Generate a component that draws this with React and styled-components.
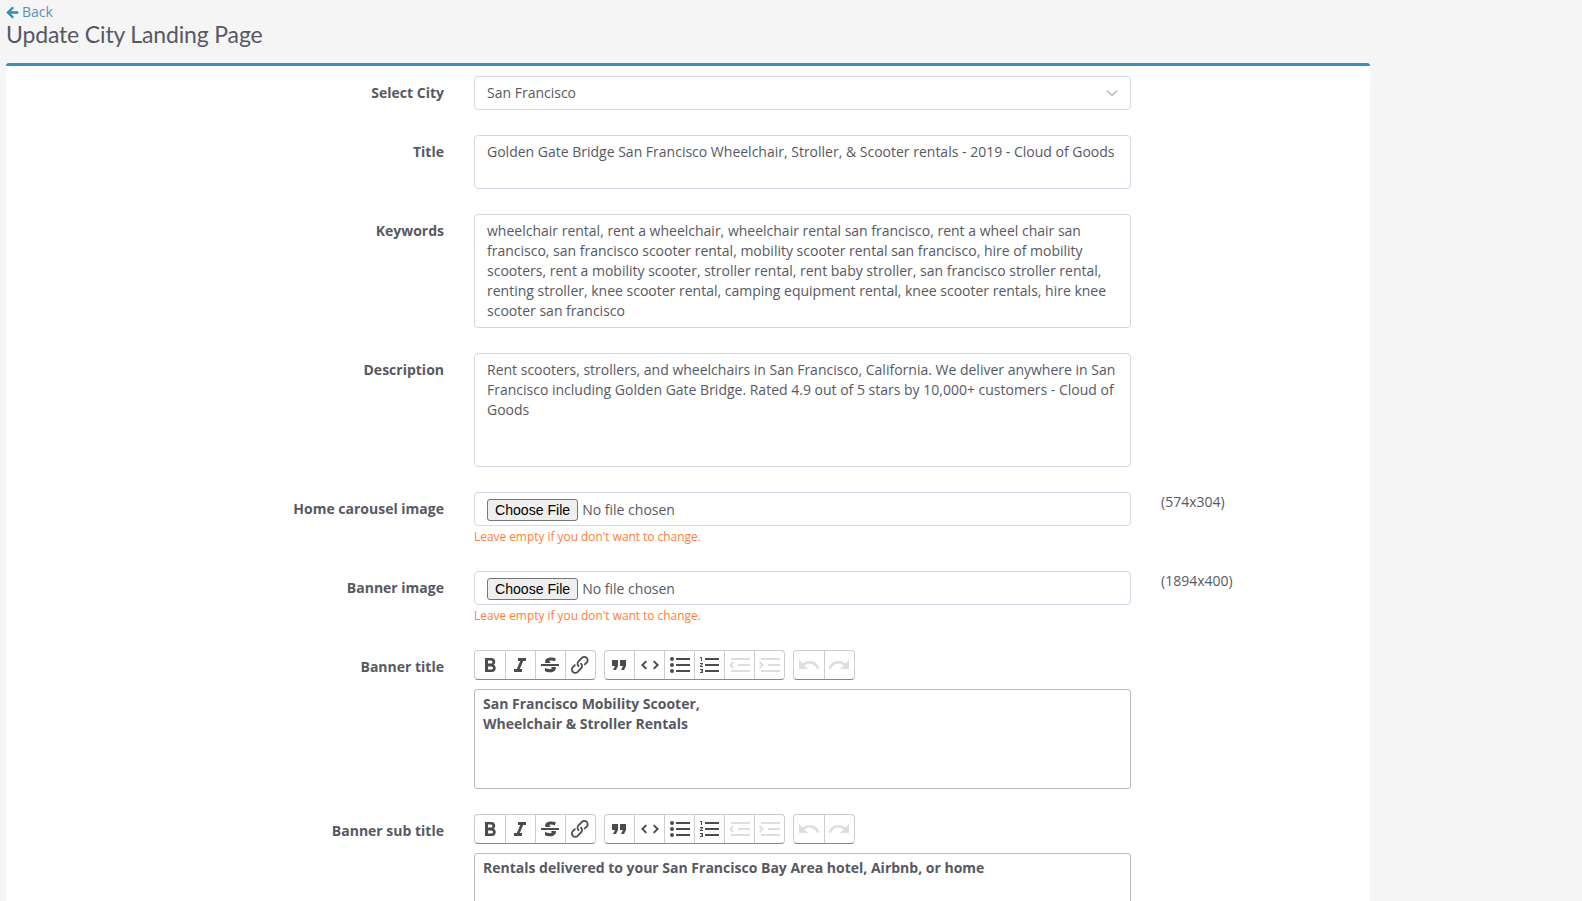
import React from 'react';
import styled, { createGlobalStyle } from 'styled-components';

const GlobalStyle = createGlobalStyle`
  html, body {
    margin: 0;
    height: 100%;
    overflow: hidden;
    background-color: #f5f5f5;
  }
  body {
    font-family: "Open Sans", "Liberation Sans", sans-serif;
    font-size: 14px;
    line-height: 20px;
    color: #575962;
  }
`;

const Page = styled.div`
  padding: 2px 212px 0 6px;
`;

const BackLink = styled.a`
  display: flex;
  align-items: center;
  gap: 3px;
  height: 20px;
  color: #5b8fc0;
  font-size: 14px;
  text-decoration: none;
`;

const BackArrow = styled.svg`
  width: 13px;
  height: 13px;
  fill: #3c8dbc;
  stroke: #3c8dbc;
  stroke-width: 24;
`;

const Heading = styled.h1`
  margin: 0 0 13px;
  height: 28px;
  font-family: Lato, "Noto Sans", sans-serif;
  font-size: 23px;
  line-height: 24px;
  letter-spacing: -0.15px;
  font-weight: 400;
  color: #575962;
`;

const Panel = styled.div`
  background-color: #fff;
  border-top: 3px solid #3c8dbc;
  border-radius: 3px 3px 0 0;
  padding-top: 10px;
`;

const Row = styled.div`
  display: grid;
  grid-template-columns: 438px 657px 1fr;
  column-gap: 30px;
  margin-bottom: 25px;
`;

const Label = styled.label`
  padding-top: 7px;
  text-align: right;
  font-weight: 700;
  color: #575962;
`;

const Field = styled.div`
  min-width: 0;
`;

const SelectWrap = styled.div`
  position: relative;
`;

const CitySelect = styled.select`
  display: block;
  width: 100%;
  height: 34px;
  padding: 0 12px;
  appearance: none;
  background-color: #fff;
  border: 1px solid #d5d6e2;
  border-radius: 4px;
  font: inherit;
  color: #575962;
`;

const Chevron = styled.svg`
  position: absolute;
  top: 13px;
  right: 13px;
  width: 12px;
  height: 8px;
  pointer-events: none;
`;

const TextArea = styled.textarea`
  display: block;
  box-sizing: border-box;
  width: 100%;
  height: ${props => props.$height}px;
  padding: 6px 12px;
  background-color: #fff;
  border: 1px solid #d5d6e2;
  border-radius: 4px;
  font: inherit;
  color: #575962;
  resize: none;
  overflow: hidden;
`;

const FileBox = styled.div`
  display: flex;
  align-items: center;
  box-sizing: border-box;
  height: 34px;
  padding: 2px 12px 0;
  border: 1px solid #d5d6e2;
  border-radius: 4px;
`;

const FileInput = styled.input`
  width: 100%;
  font: inherit;
  color: #575962;

  &::file-selector-button {
    font-family: "Liberation Sans", Arial, sans-serif;
    font-size: 14.1px;
    height: 22px;
    padding: 0 7px;
    margin-right: 4px;
    background-color: #efefef;
    border: 1px solid #767676;
    border-radius: 3px;
    color: #000;
  }
`;

const Hint = styled.div`
  margin: 1px 0;
  font-size: 11.9px;
  line-height: 18px;
  color: #fd7e3c;
`;

const SideNote = styled.div`
  color: #575962;
`;

const Toolbar = styled.div`
  display: flex;
  gap: 8px;
  margin-bottom: 9px;
`;

const ButtonGroup = styled.div`
  display: flex;
  box-sizing: border-box;
  height: 30px;
  border: 1px solid #ccc;
  border-bottom-color: #888;
  border-radius: 4px;
`;

const ToolButton = styled.button`
  display: flex;
  align-items: center;
  justify-content: center;
  width: 30px;
  padding: 0;
  background: none;
  border: 0;
  border-left: 1px solid #ccc;

  &:first-child {
    width: 29.5px;
    border-left: 0;
  }

  svg {
    flex: none;
    width: 24px;
    height: 24px;
    fill: #000;
    opacity: ${props => (props.$off ? 0.125 : 0.7)};
  }
`;

const Editor = styled.div`
  box-sizing: border-box;
  min-height: 100px;
  padding: 4px 8px;
  border: 1px solid #bbb;
  border-radius: 3px;
  font-weight: 700;
  color: #575962;
`;

const paths = {
  bold: 'M15.6 11.8c1-.7 1.6-1.8 1.6-2.8a4 4 0 0 0-4-4H7v14h7c2.1 0 3.7-1.7 3.7-3.8 0-1.5-.8-2.8-2.1-3.4zM10 7.5h3a1.5 1.5 0 1 1 0 3h-3v-3zm3.5 9H10v-3h3.5a1.5 1.5 0 1 1 0 3z',
  italic: 'M10 5v3h2.2l-3.4 8H6v3h8v-3h-2.2l3.4-8H18V5h-8z',
  strike: 'M12.73 14l.28.14c.26.15.45.3.57.44.12.14.18.3.18.5 0 .3-.15.56-.44.75-.3.2-.76.3-1.39.3A13.52 13.52 0 0 1 7 14.95v3.37a10.64 10.64 0 0 0 4.84.88c1.26 0 2.35-.19 3.28-.56.93-.37 1.64-.9 2.14-1.57s.74-1.45.74-2.32c0-.26-.02-.5-.06-.74h-5.2zm-5.5-4c-.08-.28-.12-.59-.12-.93a4.1 4.1 0 0 1 1.68-3.45 7.3 7.3 0 0 1 4.4-1.22c1.6 0 3.2.35 4.8 1.06l-1.16 2.84a11.6 11.6 0 0 0-3.74-.89c-.55 0-.96.1-1.22.3a.86.86 0 0 0-.37.73c0 .25.12.5.35.7.2.2.66.47 1.35.82H7.23zM3 13h18v-2H3v2z',
  link: 'M9.88 13.7a4.3 4.3 0 0 1 0-6.07l3.37-3.37a4.26 4.26 0 0 1 6.07 0 4.3 4.3 0 0 1 0 6.06l-1.96 1.72a.91.91 0 1 1-1.3-1.3l1.97-1.71a2.46 2.46 0 0 0-3.48-3.48l-3.38 3.37a2.46 2.46 0 0 0 0 3.48.91.91 0 1 1-1.3 1.3z M4.25 19.46a4.3 4.3 0 0 1 0-6.07l1.93-1.9a.91.91 0 1 1 1.3 1.3l-1.93 1.9a2.46 2.46 0 0 0 3.48 3.48l3.37-3.38c.96-.96.96-2.52 0-3.48a.91.91 0 1 1 1.3-1.3 4.3 4.3 0 0 1 0 6.07l-3.38 3.38a4.26 4.26 0 0 1-6.07 0z',
  quote: 'M6 17h3l2-4V7H5v6h3zm8 0h3l2-4V7h-6v6h3z',
  code: 'M18.2 12L15 15.2l1.4 1.4L21 12l-4.6-4.6L15 8.8l3.2 3.2zM5.8 12L9 8.8 7.6 7.4 3 12l4.6 4.6L9 15.2 5.8 12z',
  bullets: 'M4 4a2 2 0 1 0 0 4 2 2 0 0 0 0-4zm0 6a2 2 0 1 0 0 4 2 2 0 0 0 0-4zm0 6a2 2 0 1 0 0 4 2 2 0 0 0 0-4zm4 3h14v-2H8v2zm0-6h14v-2H8v2zm0-8v2h14V5H8z',
  numbers: 'M2 17h2v.5H3v1h1v.5H2v1h3v-4H2v1zm1-9h1V4H2v1h1v3zm-1 3h1.8L2 13.1v.9h3v-1H3.2L5 10.9V10H2v1zm5-6v2h14V5H7zm0 14h14v-2H7v2zm0-6h14v-2H7v2z',
  outdent: 'M3 19h19v-2H3v2zm7-6h12v-2H10v2zm-8.3-.3l2.8 2.9L6 14.2 4 12l2-2-1.4-1.5L1 12l.7.7zM3 5v2h19V5H3z',
  indent: 'M3 19h19v-2H3v2zm7-6h12v-2H10v2zm-6.9-1L1 14.2l1.4 1.4L6 12l-.7-.7-2.9-2.9L1 9.8 3.1 12zM3 5v2h19V5H3z',
  undo: 'M12.5 8c-2.6 0-5 1-6.9 2.6L2 7v9h9l-3.6-3.6A8 8 0 0 1 20 16l2.4-.8a10.5 10.5 0 0 0-10-7.2z',
  redo: 'M18.4 10.6a10.5 10.5 0 0 0-16.9 4.6L4 16a8 8 0 0 1 12.7-3.6L13 16h9V7l-3.6 3.6z',
};

const toolGroups = [
  [{ icon: 'bold' }, { icon: 'italic' }, { icon: 'strike' }, { icon: 'link' }],
  [
    { icon: 'quote' },
    { icon: 'code' },
    { icon: 'bullets' },
    { icon: 'numbers' },
    { icon: 'outdent', off: true },
    { icon: 'indent', off: true },
  ],
  [{ icon: 'undo', off: true }, { icon: 'redo', off: true }],
];

function RichToolbar() {
  return (
    <Toolbar>
      {toolGroups.map((group, i) => (
        <ButtonGroup key={i}>
          {group.map(tool => (
            <ToolButton key={tool.icon} type="button" $off={tool.off} aria-label={tool.icon}>
              <svg viewBox="0 0 24 24"><path d={paths[tool.icon]} /></svg>
            </ToolButton>
          ))}
        </ButtonGroup>
      ))}
    </Toolbar>
  );
}

function FileRow({ label, size }) {
  return (
    <Row>
      <Label>{label}</Label>
      <Field>
        <FileBox>
          <FileInput type="file" />
        </FileBox>
        <Hint>Leave empty if you don't want to change.</Hint>
      </Field>
      <SideNote>{size}</SideNote>
    </Row>
  );
}

export default function App() {
  return (
    <Page>
      <GlobalStyle />
      <BackLink href="#">
        <BackArrow viewBox="0 0 448 512">
          <path d="M257.5 445.1l-22.2 22.2c-9.4 9.4-24.6 9.4-33.9 0L7 273c-9.4-9.4-9.4-24.6 0-33.9L201.4 44.7c9.4-9.4 24.6-9.4 33.9 0l22.2 22.2c9.5 9.5 9.3 25-.4 34.3L136.6 216H424c13.3 0 24 10.7 24 24v32c0 13.3-10.7 24-24 24H136.6l120.5 114.8c9.8 9.3 10 24.8.4 34.3z" />
        </BackArrow>
        Back
      </BackLink>
      <Heading>Update City Landing Page</Heading>
      <Panel>
        <Row>
          <Label>Select City</Label>
          <SelectWrap>
            <CitySelect defaultValue="San Francisco">
              <option>San Francisco</option>
            </CitySelect>
            <Chevron viewBox="0 0 12 8" fill="none" stroke="#777" strokeWidth="1">
              <path d="M1 1.5l5 5 5-5" />
            </Chevron>
          </SelectWrap>
        </Row>
        <Row>
          <Label>Title</Label>
          <TextArea
            $height={54}
            readOnly
            value="Golden Gate Bridge San Francisco Wheelchair, Stroller, & Scooter rentals - 2019 - Cloud of Goods"
          />
        </Row>
        <Row>
          <Label>Keywords</Label>
          <TextArea
            $height={114}
            readOnly
            value="wheelchair rental, rent a wheelchair, wheelchair rental san francisco, rent a wheel chair san francisco, san francisco scooter rental, mobility scooter rental san francisco, hire of mobility scooters, rent a mobility scooter, stroller rental, rent baby stroller, san francisco stroller rental, renting stroller, knee scooter rental, camping equipment rental, knee scooter rentals, hire knee scooter san francisco"
          />
        </Row>
        <Row>
          <Label>Description</Label>
          <TextArea
            $height={114}
            readOnly
            value="Rent scooters, strollers, and wheelchairs in San Francisco, California. We deliver anywhere in San Francisco including Golden Gate Bridge. Rated 4.9 out of 5 stars by 10,000+ customers - Cloud of Goods"
          />
        </Row>
        <FileRow label="Home carousel image" size="(574x304)" />
        <FileRow label="Banner image" size="(1894x400)" />
        <Row>
          <Label>Banner title</Label>
          <Field>
            <RichToolbar />
            <Editor>
              San Francisco Mobility Scooter,
              <br />
              Wheelchair &amp; Stroller Rentals
            </Editor>
          </Field>
        </Row>
        <Row>
          <Label>Banner sub title</Label>
          <Field>
            <RichToolbar />
            <Editor>Rentals delivered to your San Francisco Bay Area hotel, Airbnb, or home</Editor>
          </Field>
        </Row>
      </Panel>
    </Page>
  );
}
